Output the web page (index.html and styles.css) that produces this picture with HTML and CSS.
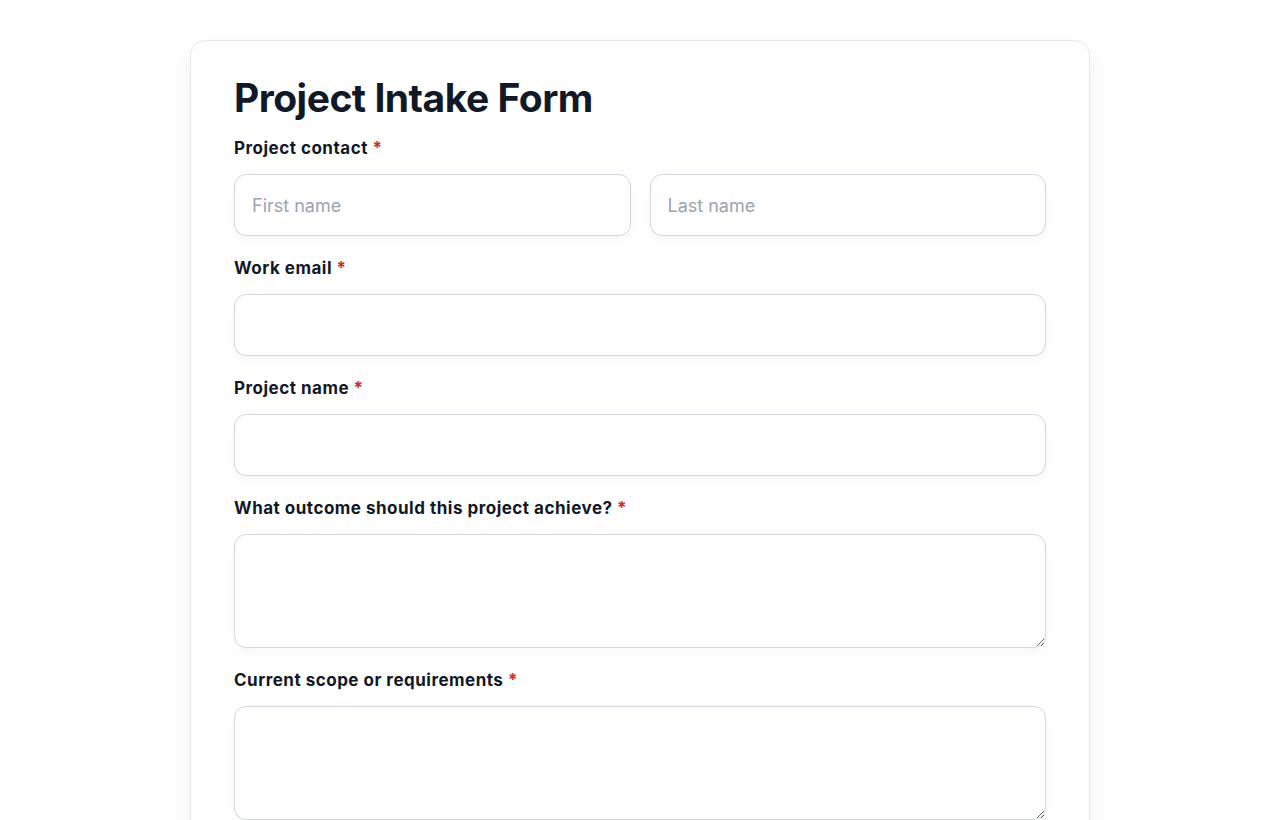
FILE: index.html
```html
<!DOCTYPE html>
<html lang="en">
<head>
<meta charset="UTF-8">
<meta name="viewport" content="width=device-width, initial-scale=1.0">
<title>Project Intake Form</title>
<link rel="stylesheet" href="styles.css">
</head>
<body>
<div class="card">
  <h1>Project Intake Form</h1>
  <form class="intake">
    <div class="field">
      <label>Project contact <span class="req">*</span></label>
      <div class="row">
        <input type="text" placeholder="First name">
        <input type="text" placeholder="Last name">
      </div>
    </div>
    <div class="field">
      <label>Work email <span class="req">*</span></label>
      <input type="email">
    </div>
    <div class="field">
      <label>Project name <span class="req">*</span></label>
      <input type="text">
    </div>
    <div class="field">
      <label>What outcome should this project achieve? <span class="req">*</span></label>
      <textarea></textarea>
    </div>
    <div class="field">
      <label>Current scope or requirements <span class="req">*</span></label>
      <textarea></textarea>
    </div>
  </form>
</div>
</body>
</html>
```

FILE: styles.css
```css
body {
  margin: 0;
  background: #ffffff;
  font-family: Inter, "Noto Sans", sans-serif;
  color: #111827;
}
.card {
  width: 812px;
  margin: 40px auto 40px;
  padding: 27px 43px 40px;
  background: #fff;
  border: 1px solid #e5e7eb;
  border-radius: 16px;
  box-shadow: 0 10px 30px rgba(17, 24, 39, 0.06);
}
h1 {
  margin: 0 0 8px;
  font-size: 39px;
  line-height: 60px;
  font-weight: 700;
  letter-spacing: -0.5px;
}
.intake {
  display: flex;
  flex-direction: column;
  gap: 20px;
}
.field label {
  display: block;
  margin-bottom: 14px;
  font-size: 17px;
  line-height: 24px;
  font-weight: 700;
  letter-spacing: 0.5px;
}
.req {
  color: #dc2626;
}
.row {
  display: flex;
  gap: 19px;
}
input, textarea {
  display: block;
  box-sizing: border-box;
  width: 100%;
  font-family: inherit;
  font-size: 18px;
  color: #111827;
  background: #fff;
  border: 1px solid #d4d6dd;
  border-radius: 12px;
  box-shadow: 0 4px 14px rgba(17, 24, 39, 0.04);
  outline: none;
}
input {
  height: 62px;
  padding: 0 17px;
}
textarea {
  height: 114px;
  padding: 14px 17px;
  resize: vertical;
}
input::placeholder {
  color: #9ca3af;
}
```
